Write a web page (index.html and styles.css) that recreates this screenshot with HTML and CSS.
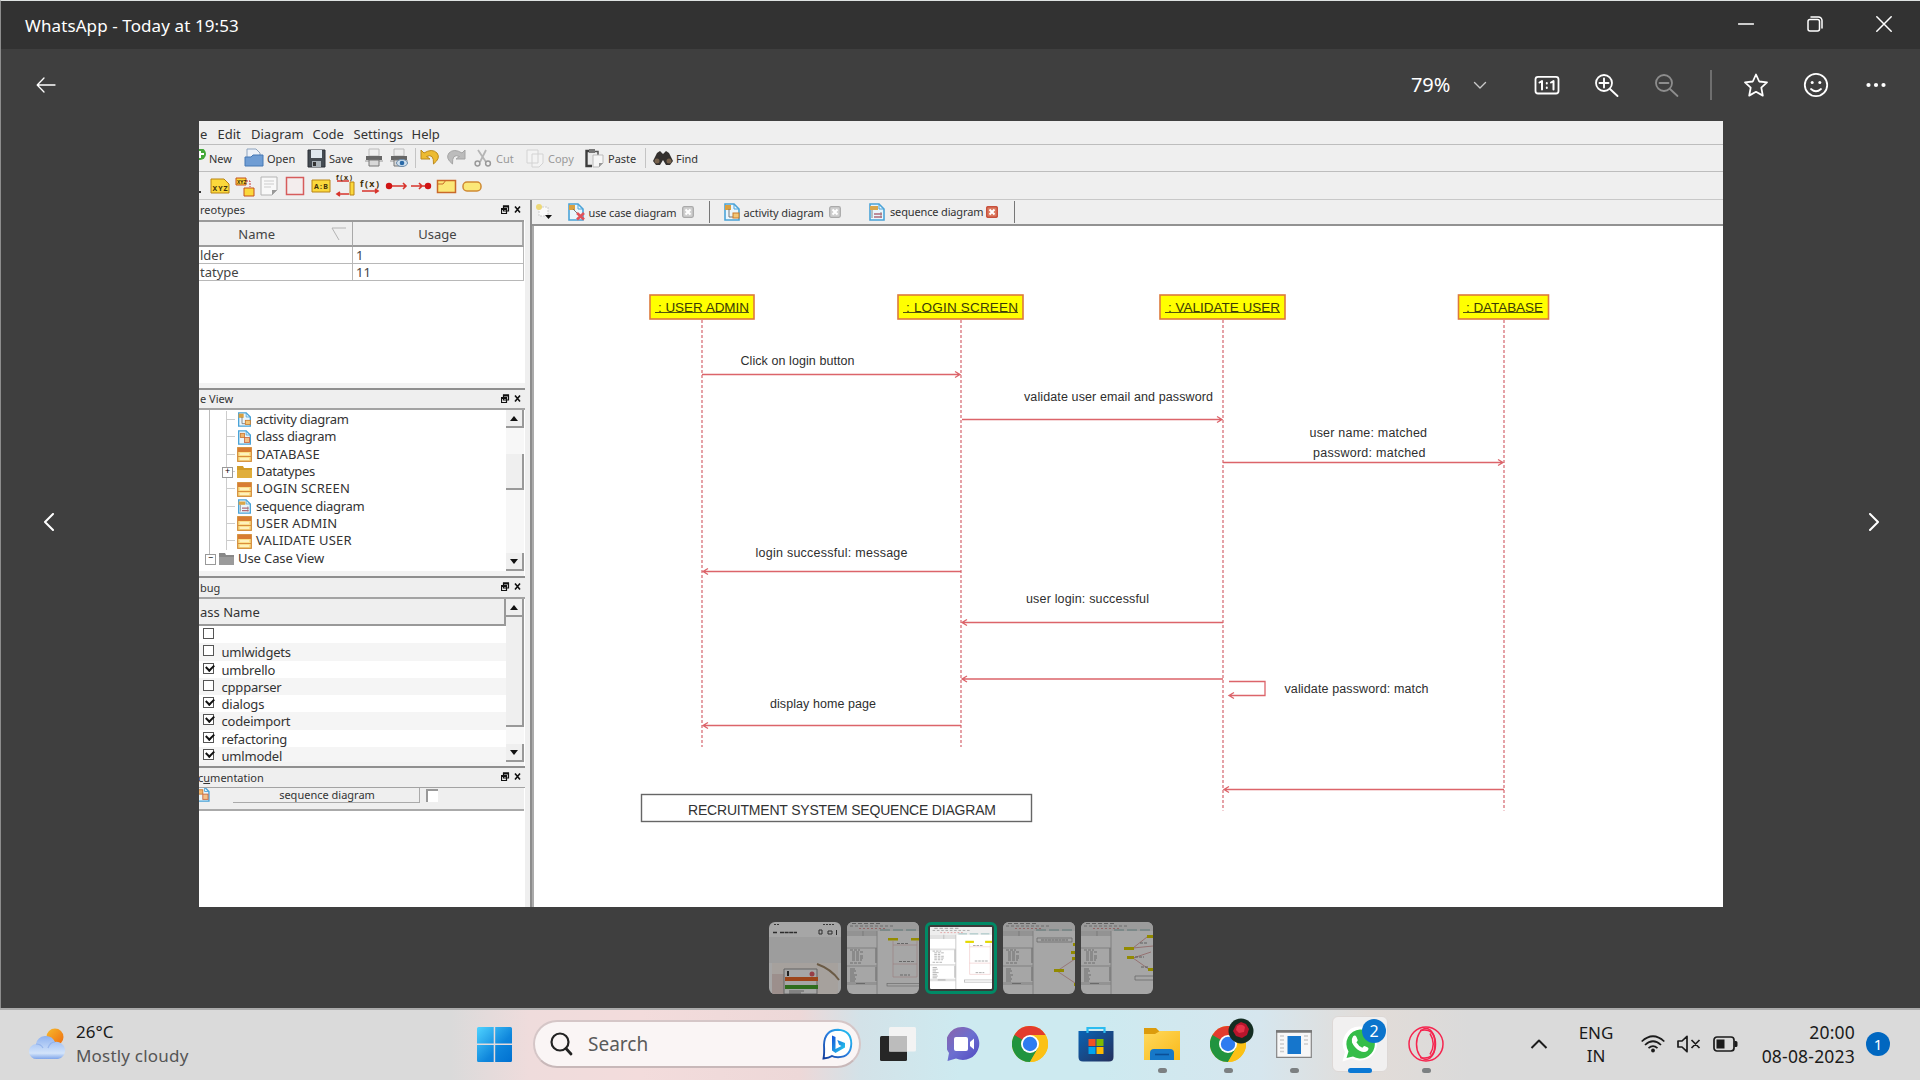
FILE: index.html
```html
<!DOCTYPE html>
<html lang="en">
<head>
<meta charset="utf-8">
<title>WhatsApp - Today at 19:53</title>
<link rel="stylesheet" href="styles.css">
</head>
<body>
<svg class="defs" width="0" height="0" aria-hidden="true">
  <defs>
    <linearGradient id="win" x1="0" y1="0" x2="1" y2="1"><stop offset="0" stop-color="#4fd3ff"/><stop offset=".6" stop-color="#0f86dc"/><stop offset="1" stop-color="#0070d0"/></linearGradient>
    <linearGradient id="cloud" x1="0" y1="0" x2="0" y2="1"><stop offset="0" stop-color="#8fb2f0"/><stop offset=".75" stop-color="#d3e4fa"/><stop offset="1" stop-color="#7fa5ea"/></linearGradient>
    <linearGradient id="sun" x1="0" y1="0" x2="1" y2="1"><stop offset="0" stop-color="#f7bb2b"/><stop offset="1" stop-color="#ee6a10"/></linearGradient>
    <linearGradient id="bing" x1="1" y1="0" x2="0" y2="1"><stop offset="0" stop-color="#21c8f2"/><stop offset=".5" stop-color="#2a7de0"/><stop offset="1" stop-color="#123d9c"/></linearGradient>
    <linearGradient id="bingb" x1="0" y1="0" x2="1" y2="1"><stop offset="0" stop-color="#1450d8"/><stop offset="1" stop-color="#27d3ee"/></linearGradient>
    <linearGradient id="chat" x1="0" y1="0" x2="1" y2="1"><stop offset="0" stop-color="#8d62a8"/><stop offset=".5" stop-color="#6c6fd0"/><stop offset="1" stop-color="#5048c0"/></linearGradient>
    <linearGradient id="store" x1="0" y1="0" x2="1" y2="1"><stop offset="0" stop-color="#0a63b4"/><stop offset="1" stop-color="#25305c"/></linearGradient>
    <linearGradient id="folder" x1="0" y1="0" x2="1" y2="1"><stop offset="0" stop-color="#ffd95c"/><stop offset="1" stop-color="#f9b91a"/></linearGradient>
    <symbol id="doc" viewBox="0 0 18 18"><path d="M2 1h9l5 5v11H2z" fill="#eaf6fd" stroke="#4aa3d8" stroke-width="1.6"/><path d="M11 1v5h5" fill="none" stroke="#4aa3d8"/></symbol>
    <symbol id="actor" viewBox="0 0 18 18"><use href="#doc"/><path d="M2 2h6v5H2z" fill="#d9a040"/><path d="M6 6l6 6" stroke="#777"/><path d="M10 10l7 6.500M17 10l-7 6.500" stroke="#e0525a" stroke-width="2.600"/></symbol>
    <symbol id="activity" viewBox="0 0 18 18"><use href="#doc"/><path d="M2 2h6v5H2z" fill="#d9a040"/><path d="M6 6v8h4" fill="none" stroke="#777"/><rect x="10" y="10" width="6" height="5" fill="#f3c778" stroke="#c97a2b"/></symbol>
    <symbol id="class" viewBox="0 0 18 18"><use href="#doc"/><rect x="4" y="4" width="5" height="5" fill="#f0b46c" stroke="#c9772f"/><rect x="9" y="9" width="6" height="6" fill="#f3c088" stroke="#c9653f"/></symbol>
    <symbol id="seq" viewBox="0 0 18 18"><use href="#doc"/><path d="M2 3h8v4H2z" fill="#d9a64a"/><path d="M4 7v8M13 9v6" stroke="#888"/><path d="M6 11h8M6 14h8" stroke="#b06a7a" stroke-width="1.500"/></symbol>
    <symbol id="obj" viewBox="0 0 15 15"><rect x=".7" y=".7" width="13.600" height="13.600" fill="#fbe08a" stroke="#d28a34" stroke-width="1.200"/><path d="M1 1h13v4H1z" fill="#d87c33"/><path d="M1 9.500h13" stroke="#d98c3c"/><path d="M3 7h9M3 12h9" stroke="#fff6cf" stroke-width="1.500"/></symbol>
    <symbol id="float" viewBox="0 0 20 10"><path d="M2.500 1h5v5h-5z M.5 3.500h5v5h-5z" fill="#efefef" stroke="#111" stroke-width="1.200"/><path d="M2 1.500h6M0 4h6" stroke="#111" stroke-width="1.800"/><path d="M14 1.500l5 6M19 1.500l-5 6" stroke="#111" stroke-width="1.600"/></symbol>
    <symbol id="close" viewBox="0 0 12 12"><rect x=".7" y=".7" width="10.600" height="10.600" rx="1.500" fill="#cfcfcf" stroke="#aaa" stroke-width="1.300"/><path d="M3.500 3.500l5 5M8.500 3.500l-5 5" stroke="#fff" stroke-width="2"/></symbol>
    <symbol id="close-red" viewBox="0 0 12 12"><rect x=".7" y=".7" width="10.600" height="10.600" rx="1.500" fill="#dc7a60" stroke="#c8503c" stroke-width="1.500"/><path d="M3.500 3.500l5 5M8.500 3.500l-5 5" stroke="#fff" stroke-width="2"/></symbol>
    <symbol id="chrome" viewBox="0 0 36 36"><circle cx="18" cy="18" r="18" fill="#fbc116"/><path d="M18 18 33.600 9A18 18 0 0 0 2.400 9L10 22z" fill="#e33b2e"/><path d="M2.400 9A18 18 0 0 0 18 36l8-13.500-8-4.500z" fill="#21943f"/><path d="M18 9h15.600A18 18 0 0 1 18 36l8-14z" fill="#fbc116"/><circle cx="18" cy="18" r="9" fill="#fff"/><circle cx="18" cy="18" r="7.200" fill="#2e7cf0"/></symbol>
    <symbol id="panel" viewBox="0 0 72 72"><rect width="72" height="72" fill="#fff"/><rect width="72" height="9" fill="#eee"/><g stroke-width=".8" opacity=".75"><path d="M5 1.500h28" stroke="#555" stroke-dasharray="4 2"/><path d="M3 4h43" stroke="#777" stroke-dasharray="3 2"/><path d="M12 6.500h28" stroke="#d66" stroke-dasharray="2 2"/></g><path d="M0 9h30v5H0zM0 25h30v2H0zM0 43h30v2H0zM0 60h30v3H0z" fill="#e2e2e2"/><path d="M16 9v5" stroke="#bbb"/><path d="M30 9v63" stroke="#c4c4c4"/><path d="M3 28h10M5 30h12M5 32h8M5 34h11M5 36h12M5 38h10M3 41h12" stroke="#888" stroke-width=".7" stroke-dasharray="3 1"/><path d="M3 47h5M3 49h6M3 51h4M3 53h7M3 55h5M3 57h6M3 59h5M9 61.500h9" stroke="#888" stroke-width=".7"/><path d="M29 26v15M29 45v14" stroke="#bbb" stroke-width="1.500"/><path d="M33 8h39" stroke="#7aa" stroke-width=".8" stroke-dasharray="10 3"/></symbol>
    <symbol id="mini" viewBox="0 0 72 72"><use href="#panel"/><rect x="41" y="16" width="10" height="2.500" fill="#e4d800"/><rect x="64" y="16" width="9" height="2.500" fill="#e4d800"/><path d="M46 19v36M70 19v36M46 23h24M46 42h24M46 55h24" fill="none" stroke="#e8b0b0" stroke-width=".5"/><path d="M50 21.500h11M52 39.500h15M53 53h10" stroke="#777" stroke-width=".7" stroke-dasharray="3 1"/><rect x="40" y="61.500" width="34" height="2.500" fill="none" stroke="#999" stroke-width=".6"/></symbol>
  </defs>
</svg>

<div class="viewer">
  <header class="titlebar">
    <span class="title">WhatsApp - Today at 19:53</span>
    <div class="window-buttons">
      <svg width="16" height="16" viewBox="0 0 16 16"><path d="M.5 8h15"/></svg>
      <svg width="16" height="16" viewBox="0 0 16 16"><rect x="1" y="3.500" width="11.500" height="11.500" rx="2"/><path d="M4 1h7.500a3.500 3.500 0 0 1 3.500 3.500V12"/></svg>
      <svg width="16" height="16" viewBox="0 0 16 16"><path d="M.8.8l14.400 14.400M15.200.8.8 15.200"/></svg>
    </div>
  </header>

  <div class="toolbar">
    <svg class="back" width="20" height="16" viewBox="0 0 20 16"><path d="M19 8H1.500M8 1 1.200 8 8 15"/></svg>
    <div class="tools">
      <span class="zoom">79%</span>
      <svg class="dim" viewBox="-12 -12 24 24"><path d="M-5.500-2.500 0 3l5.500-5.500"/></svg>
      <svg viewBox="-12 -12 24 24"><rect x="-11.500" y="-8.200" width="23" height="16.700" rx="2.500"/><path d="M-7.500-2.500-5-4V4.500M4-2.500 6.500-4V4.500M-.2-2v.5M-.2 2.500V3" stroke-width="2"/></svg>
      <svg viewBox="-12 -12 24 24"><circle cx="-3" cy="-2" r="8"/><path d="m3 4 7.500 7M-3-6.500v9M-7.500-2h9" stroke-width="1.900"/></svg>
      <svg class="off" viewBox="-12 -12 24 24"><circle cx="-3" cy="-2" r="8"/><path d="m3 4 7.500 7M-7.500-2h9"/></svg>
      <i class="divider"></i>
      <svg viewBox="-12 -12 24 24"><path d="m0-10.500 3.200 7 7.800.9-5.700 5.200 1.500 8L0 6.800l-6.800 3.800 1.500-8L-11-2.600l7.800-.9z"/></svg>
      <svg viewBox="-12 -12 24 24"><circle r="11.200"/><path d="M-5 4q5 4.500 10 0"/><circle class="fill" cx="-3.800" cy="-2.500" r="1.500"/><circle class="fill" cx="3.800" cy="-2.500" r="1.500"/></svg>
      <svg viewBox="-12 -12 24 24"><circle class="fill" cx="-7.500" r="2.100"/><circle class="fill" cx="0" r="2.100"/><circle class="fill" cx="7.500" r="2.100"/></svg>
    </div>
  </div>

  <div class="stage">
    <svg class="nav" width="12" height="18" viewBox="0 0 12 18"><path d="M10 1 2 9l8 8"/></svg>

    <main class="shot">
      <nav class="menubar"><span>e</span><span>Edit</span><span>Diagram</span><span>Code</span><span>Settings</span><span>Help</span></nav>

      <div class="actions">
        <svg width="8" height="18" viewBox="0 0 8 18"><circle cx="1" cy="5" r="6" fill="#43a838"/><path d="M-2 5h7M1 2v7" stroke="#fff" stroke-width="2"/></svg>
        <span>New</span>
        <svg width="20" height="20" viewBox="0 0 20 20"><path d="M3 1h9l4 4v10H3z" fill="#eef2f8" stroke="#8ca2bd"/><path d="M1 9h6l2-2h10v11H1z" fill="#6f9dd4" stroke="#4678b4"/></svg>
        <span>Open</span>
        <svg width="19" height="19" viewBox="0 0 19 19"><path d="M1 1h17v17H1z" fill="#444b52" stroke="#2c3136"/><path d="M4 1h11v8H4z" fill="#dfe8ef"/><path d="M5 12h9v6H5z" fill="#aab2b8"/><path d="M6 13h3v4H6z" fill="#333"/></svg>
        <span>Save</span>
        <svg width="20" height="20" viewBox="0 0 20 20"><path d="M5 1h10v7H5z" fill="#eee" stroke="#bbb"/><path d="M2 8h16v4H2z" fill="#666"/><path d="M1 13h18" stroke="#c4c4c4" stroke-width="2"/><path d="M5 12h10v6H5z" fill="#d8d8d8" stroke="#777"/></svg>
        <svg width="20" height="20" viewBox="0 0 20 20"><path d="M5 1h10v7H5z" fill="#eee" stroke="#bbb"/><path d="M2 8h16v4H2z" fill="#666"/><path d="M1 13h18" stroke="#c4c4c4" stroke-width="2"/><path d="M5 12h10v6H5z" fill="#d8d8d8" stroke="#777"/><ellipse cx="13" cy="15" rx="5.500" ry="3.500" fill="#cfe0ef" stroke="#6c8cab"/><circle cx="13" cy="15" r="2.300" fill="#2a6aa8"/></svg>
        <i class="bar"></i>
        <svg width="20" height="18" viewBox="0 0 20 18"><path d="M1 1v9h9L6.500 7.500Q14 4 13.500 15 21 9 17 4 12-1 4 4z" fill="#edbb32" stroke="#bd8a1c"/></svg>
        <svg width="20" height="18" viewBox="0 0 20 18"><path d="M19 1v9h-9l3.500-2.500Q6 4 6.500 15-1 9 3 4 8-1 16 4z" fill="#bcbcbc" stroke="#a5a5a5"/></svg>
        <svg width="18" height="18" viewBox="0 0 18 18"><path d="M4 1l8 12M12 1 6 13" stroke="#b5b5b5" stroke-width="1.800"/><circle cx="3.500" cy="14.500" r="2.400" fill="none" stroke="#999" stroke-width="1.500"/><circle cx="14" cy="14.500" r="2.400" fill="none" stroke="#999" stroke-width="1.500"/></svg>
        <span class="faded">Cut</span>
        <svg width="19" height="19" viewBox="0 0 19 19"><path d="M1 1h11v13H1zM6 5h11v9l-4 4H6z" fill="#f3f3f3" stroke="#d3d3d3"/></svg>
        <span class="faded">Copy</span>
        <svg width="20" height="19" viewBox="0 0 20 19"><path d="M9 2H1.500v15H7" fill="#e9e9e9" stroke="#3d3d3d" stroke-width="2.400"/><path d="M9 2.500h4V6" fill="none" stroke="#555" stroke-width="1.500"/><path d="M4 0h6v4H4z" fill="#777"/><path d="M8 6h10v8l-4 4H8z" fill="#f6f6f6" stroke="#bbb"/><path d="M14 18v-4h4z" fill="#999"/></svg>
        <span>Paste</span>
        <i class="bar"></i>
        <svg width="20" height="16" viewBox="0 0 20 16"><path d="M4 3 7 1l3 3 3-3 3 2 4 8-3 4h-4l-3-5-3 5H3l-3-4z" fill="#33302e"/><circle cx="4" cy="11" r="2.500" fill="#77624d"/><circle cx="16" cy="11" r="2.500" fill="#77624d"/></svg>
        <span>Find</span>
      </div>

      <div class="palette">
        <svg width="290" height="27" viewBox="0 0 290 27">
          <path d="M0 19h2v2H0z" fill="#333"/>
          <g fill="#fbd83c" stroke="#b98414"><path d="M12 7h13l5 5v9H12z"/><path d="M37 6h10v7H37zM45 16h10v8H45z" stroke="#c4501c"/><path d="M113 8h18v12h-18z"/></g>
          <path d="M47 9h4v6" fill="none" stroke="#c33" stroke-dasharray="2 1"/>
          <path d="M62 5h16v13l-5 5H62z" fill="#f8f8f8" stroke="#b4b4b4"/><path d="M65 9h10M65 12h10M65 15h7" stroke="#ccc"/><path d="M73 23v-5h5z" fill="#999"/>
          <path d="M87.500 5.500h17v17h-17z" fill="#f3eded" stroke="#d65c5c" stroke-width="1.500"/>
          <path d="M151 10h4v13h-4z" fill="#fbd83c" stroke="#b98414"/>
          <g stroke="#d8342c" stroke-width="1.600" fill="none"><path d="M138 9h12M150 22h-12M141 20l-3 2 3 2M163 19h16M176 17l3 2-3 2"/><path d="M190 14h17M204 11l3 3-3 3M212 14h17M220 11l3 3-3 3"/></g>
          <circle cx="190" cy="14" r="3.200" fill="#d01414"/><circle cx="229" cy="14" r="3.200" fill="#d01414"/>
          <path d="M238.500 8.500h18v12h-18z" fill="#fbe878" stroke="#c96a2a" stroke-width="1.500"/><path d="M239 12h5l3-4" fill="none" stroke="#c96a2a"/>
          <rect x="264" y="10" width="18" height="9" rx="4" fill="#fbe878" stroke="#cf8a34" stroke-width="1.500"/>
          <g class="tiny"><text x="13.500" y="19" textLength="15">XYZ</text><text class="xs" x="38" y="12">XYZ</text><text x="115" y="17" textLength="14">A:B</text><text x="137" y="7.500" textLength="16">f(x)</text><text class="fx" x="161" y="15" textLength="19">f(x)</text></g>
        </svg>
      </div>

      <div class="workspace">
        <aside class="docks">
          <div class="dock-title h20"><span>reotypes</span><svg width="20" height="10"><use href="#float"/></svg></div>
          <div class="stereo">
            <div class="th name">Name<svg width="16" height="14" viewBox="0 0 16 14"><path d="M15 1H1l7 12" fill="none" stroke="#b4b4b4"/></svg></div><div class="th">Usage</div>
            <div class="td first">lder</div><div class="td">1</div>
            <div class="td first">tatype</div><div class="td">11</div>
          </div>
          <div class="blank"></div>

          <div class="dock-title ruled"><span>e View</span><svg width="20" height="10"><use href="#float"/></svg></div>
          <div class="pane tree-pane">
            <ul class="tree">
              <li><svg><use href="#activity"/></svg>activity diagram</li>
              <li><svg><use href="#class"/></svg>class diagram</li>
              <li class="caps"><svg><use href="#obj"/></svg>DATABASE</li>
              <li class="plus"><svg viewBox="0 0 15 15"><path d="M0 2h6l1 2h8v10H0z" fill="#d29b27"/><path d="M0 6h15v8H0z" fill="#e0ae3c"/></svg>Datatypes</li>
              <li class="caps"><svg><use href="#obj"/></svg>LOGIN SCREEN</li>
              <li><svg><use href="#seq"/></svg>sequence diagram</li>
              <li class="caps"><svg><use href="#obj"/></svg>USER ADMIN</li>
              <li class="caps"><svg><use href="#obj"/></svg>VALIDATE USER</li>
              <li class="root"><svg viewBox="0 0 15 15"><path d="M0 2h6l1 2h8v10H0z" fill="#888"/><path d="M0 6h15v8H0z" fill="#9b9b9b"/></svg>Use Case View</li>
            </ul>
            <div class="scroll"><b class="up"></b><i class="thumb t1"></i><b class="down"></b></div>
          </div>

          <div class="dock-title ruled second"><span>bug</span><svg width="20" height="10"><use href="#float"/></svg></div>
          <div class="pane debug-pane">
            <div class="debug">
              <div class="debug-head">ass Name</div>
              <div class="row"><i></i></div>
              <div class="row"><i></i>umlwidgets</div>
              <div class="row"><i class="on"></i>umbrello</div>
              <div class="row"><i></i>cppparser</div>
              <div class="row"><i class="on"></i>dialogs</div>
              <div class="row"><i class="on"></i>codeimport</div>
              <div class="row"><i class="on"></i>refactoring</div>
              <div class="row"><i class="on"></i>umlmodel</div>
            </div>
            <div class="scroll"><b class="up"></b><i class="thumb t2"></i><b class="down"></b></div>
          </div>

          <div class="dock-title ruled third"><span class="nudge">c<u>u</u>mentation</span><svg width="20" height="10"><use href="#float"/></svg></div>
          <div class="doc-row"><svg width="18" height="14" viewBox="5 2 13 16"><use href="#class" width="18" height="18"/></svg><span>sequence diagram</span><i></i></div>
        </aside>

        <section class="editor">
          <div class="tabs">
            <svg width="16" height="16" viewBox="0 0 16 16"><path d="M3 3h9v9H3z" fill="#fafafa" stroke="#ccc" stroke-dasharray="2 1"/><circle cx="3" cy="3" r="3" fill="#edd878"/><path d="M9 11h7l-3.500 4z" fill="#111"/></svg>
            <svg width="18" height="18"><use href="#actor"/></svg><span>use case diagram</span><svg width="12" height="12"><use href="#close"/></svg><i class="tick"></i>
            <svg width="18" height="18"><use href="#activity"/></svg><span>activity diagram</span><svg width="12" height="12"><use href="#close"/></svg><i></i>
            <svg class="lift" width="18" height="18"><use href="#seq"/></svg><span class="lift">sequence diagram</span><svg class="lift" width="12" height="12"><use href="#close-red"/></svg><i class="tick"></i>
          </div>
          <svg class="canvas" width="1189" height="681" viewBox="534 226 1189 681">
            <g class="life"><path d="M702 320V747M961 320V747M1223 320V810.500M1504 320V810.500"/></g>
            <g class="msg">
              <path d="M702 374.500H960M955 371.500l5 3-5 3"/>
              <path d="M962 419.500h260M1217 416.500l5 3-5 3"/>
              <path d="M1223 462.500h280M1498 459.500l5 3-5 3"/>
              <path d="M961 571.500H703M708 568.500l-5 3 5 3"/>
              <path d="M1223 622.500H962M967 619.500l-5 3 5 3"/>
              <path d="M1223 679H962M967 676l-5 3 5 3"/>
              <path d="M961 725.500H703M708 722.500l-5 3 5 3"/>
              <path d="M1504 789.500h-280M1229 786.500l-5 3 5 3"/>
              <path d="M1229 681.500h36V695.500h-36M1234 692.500l-5 3 5 3"/>
            </g>
            <g class="head"><rect x="650" y="295" width="104" height="24"/><rect x="898" y="295" width="125" height="24"/><rect x="1160" y="295" width="125" height="24"/><rect x="1458.500" y="295" width="90" height="24"/></g>
            <path class="under" d="M655 312.500h94M903 312.500h115M1165 312.500h115M1463 312.500h80"/>
            <g class="label">
              <text x="658" y="311.500" textLength="91">: USER ADMIN</text>
              <text x="906" y="311.500" textLength="112">: LOGIN SCREEN</text>
              <text x="1168" y="311.500" textLength="112">: VALIDATE USER</text>
              <text x="1466" y="311.500" textLength="77">: DATABASE</text>
            </g>
            <g class="note">
              <text x="740.500" y="364.500" textLength="114">Click on login button</text>
              <text x="1024" y="401" textLength="189">validate user email and password</text>
              <text x="1309.500" y="436.500" textLength="117.500">user name: matched</text>
              <text x="1313" y="456.500" textLength="112.500">password: matched</text>
              <text x="755.500" y="556.500" textLength="152">login successful: message</text>
              <text x="1026" y="603" textLength="123">user login: successful</text>
              <text x="770" y="708" textLength="106">display home page</text>
              <text x="1284.500" y="693" textLength="144">validate password: match</text>
            </g>
            <rect class="frame" x="641.500" y="794.500" width="390" height="27"/>
            <text class="caption" x="688" y="814.500" textLength="308">RECRUITMENT SYSTEM SEQUENCE DIAGRAM</text>
          </svg>
        </section>
      </div>
    </main>

    <svg class="nav" width="12" height="18" viewBox="0 0 12 18"><path d="m2 1 8 8-8 8"/></svg>
  </div>

  <div class="strip">
    <svg class="thumb-img" viewBox="0 0 72 72"><rect width="72" height="72" fill="#fff"/><path d="M0 15h72v26H0z" fill="#f1f1f1"/><path d="M5 2.500h6M54 2.500h12" stroke="#555" stroke-width="1.200" stroke-dasharray="2 1"/><path d="M4 10.500h4M11 10.500h17" stroke="#444" stroke-width="1.500" stroke-dasharray="4 .6"/><path d="M50 8h3v4h-3zM59 9h4v3h-4zM67.500 8v5" stroke="#444" fill="none"/><path d="M3 41h66v31H3z" fill="#fff7f2"/><path d="M3 52h12v20H3z" fill="#f0dcd8"/><path d="M48 42q14 5 22 16" stroke="#a58c6c" stroke-width="2" fill="none"/><path d="M15 47h33v25H15z" fill="#fff" stroke="#999"/><path d="M16 55h33v4H16z" fill="#f26a28"/><path d="M16 63h33v4H16z" fill="#4aa82e"/><path d="M19 49v5" stroke="#333" stroke-width="2"/><circle cx="43" cy="52" r="2.500" fill="#e8606c"/><path d="M20 69h15M20 71h12" stroke="#777" stroke-width=".8"/></svg>
    <svg class="thumb-img" viewBox="0 0 72 72"><use href="#mini"/></svg>
    <svg class="thumb-img current" viewBox="0 0 72 72"><use href="#mini"/></svg>
    <svg class="thumb-img" viewBox="0 0 72 72"><use href="#panel"/><path d="M54 49l18-12M54 49l18 12" stroke="#d99" stroke-width=".7"/><path d="M51 47h10v3H51zM69 35h5v3h-5zM68 29h6v3h-6zM70 21h4v3h-4zM71 61h3v3h-3z" fill="#e0d400"/><path d="M34 16h35v4H34z" fill="none" stroke="#999" stroke-width=".7"/><path d="M38 18h27" stroke="#888" stroke-width=".8" stroke-dasharray="3 .5"/></svg>
    <svg class="thumb-img" viewBox="0 0 72 72"><use href="#panel"/><path d="M52 26l14-11M52 26l20-2M52 36l18-6M52 36l17 12" fill="none" stroke="#d99" stroke-width=".8"/><path d="M43 25h10v3H43zM46 34h7v3h-7zM66 13h7v3h-7zM67 46h6v3h-6z" fill="#e0d400"/><path d="M54 35h9M59 21h8M60 45h8" stroke="#777" stroke-width=".8" stroke-dasharray="3 1"/><path d="M54 54h20v4H54z" fill="none" stroke="#999" stroke-width=".7"/></svg>
  </div>
</div>

<footer class="taskbar">
  <div class="weather">
    <svg width="37" height="32" viewBox="0 0 37 32"><circle cx="26" cy="9" r="8.500" fill="url(#sun)"/><path d="M8 31a7.500 7.500 0 0 1-1-15 10 10 0 0 1 19-2 8.500 8.500 0 0 1 3 17z" fill="url(#cloud)"/><path d="M7 16q5 0 7 4M19 20q2-6 7-6" fill="none" stroke="#7fa3e6" stroke-width="1.200" opacity=".6"/></svg>
    <div class="two"><span class="temp">26°C</span><span class="sky">Mostly cloudy</span></div>
  </div>
  <svg class="start" width="35" height="35" viewBox="0 0 35 35"><path d="M0 1.500Q0 0 1.500 0h15.200v16.500H0zM18.200 0h15.300Q35 0 35 1.500v15H18.200zM0 18h16.700v17H1.500Q0 35 0 33.500zM18.200 18H35v15.500q0 1.500-1.500 1.500H18.200z" fill="url(#win)"/></svg>
  <div class="search">
    <svg width="24" height="24" viewBox="0 0 24 24"><circle cx="10" cy="10" r="8.500" fill="none" stroke="#222" stroke-width="2.200"/><path d="m16 16.500 5 5.500" stroke="#222" stroke-width="2.800" stroke-linecap="round"/></svg>
    <span>Search</span>
    <svg width="31" height="32" viewBox="0 0 31 32"><path d="M1.500 30.500Q2.500 26 2 17 2.500 2 16 1.800 29 2.500 29.300 15.500 29 29 16 29.200q-4 0-6-1.200-3 2.200-8.500 2.500z" fill="#fff" stroke="url(#bing)" stroke-width="1.900"/><path d="M10 7.500 13.500 9v12l6-3-2.500-1.200L15.300 12l7.700 3v4.500L13.500 25 10 22.500z" fill="url(#bingb)"/></svg>
  </div>
  <div class="apps">
    <div class="app"><svg width="36" height="34" viewBox="0 0 36 34"><rect y="9" width="27" height="25" rx="1.500" fill="#262626"/><rect x="9" width="27" height="24.500" rx="1.500" fill="#f3f3f3"/><path d="M9 9h18v15.500H9z" fill="#bcbcbc"/></svg></div>
    <div class="app"><svg width="34" height="36" viewBox="0 0 34 36"><path d="M17 1a16.500 16.500 0 1 1-8 31.500L.5 35l1.500-8A16.500 16.500 0 0 1 17 1z" fill="url(#chat)"/><rect x="7" y="11" width="14" height="14" rx="2" fill="#fff"/><path d="m23 16 4-3.500v11L23 20z" fill="#fff"/></svg></div>
    <div class="app"><svg width="36" height="36"><use href="#chrome"/></svg></div>
    <div class="app"><svg width="36" height="36" viewBox="0 0 36 36"><path d="M9.500 7V2h17v5" fill="none" stroke="#2bbcf0" stroke-width="2.200"/><path d="M.5 5h35v26q0 4.500-4.500 4.500H5Q.5 35.500.5 31z" fill="url(#store)"/><path d="M9.500 5v2M26.500 5v2" stroke="#2bbcf0" stroke-width="2.200"/><path d="M10.500 13h7v7h-7z" fill="#f25022"/><path d="M18.500 13h7v7h-7z" fill="#7fba00"/><path d="M10.500 21h7v7h-7z" fill="#00a4ef"/><path d="M18.500 21h7v7h-7z" fill="#ffb900"/></svg></div>
    <div class="app"><svg width="36" height="36" viewBox="0 0 36 36"><path d="M0 2h12l4 4v6H0z" fill="#dc9b0c"/><path d="M0 8h11l5-3h20v29H0z" fill="url(#folder)"/><path d="M6 34v-7q0-4 4-4h16q4 0 4 4v7z" fill="#1678c8"/><path d="M11 28.500h14" stroke="#0b4f96" stroke-width="1.600"/></svg><i class="dot"></i></div>
    <div class="app"><svg width="36" height="36"><use href="#chrome"/></svg><svg class="avatar" width="26" height="26" viewBox="0 0 26 26"><circle cx="13" cy="13" r="12.500" fill="#142d22"/><path d="m8 7 5-3 5 2 3 5-2 6-5 3-6-2-3-5z" fill="#b9152c"/><path d="M9 8q5-3 8 1l-1 5-5 1-3-3z" fill="#e63248"/></svg><i class="dot"></i></div>
    <div class="app"><svg width="36" height="28" viewBox="0 0 36 28"><path d="M.7.7h34.600v26.600H.7z" fill="#f7f7f7" stroke="#858585" stroke-width="1.200"/><path d="M0 1.500h36" stroke="#777" stroke-width="2.500"/><path d="M11.500 6h13.500v18H11.500z" fill="#1676cc"/><path d="M4 6h4M4 10h4M4 14h4M4 18h4M4 21.500h4M28 6h4M28 10h4M28 14h4" stroke="#ccc" stroke-width="1.600"/></svg><i class="dot"></i></div>
    <div class="app active"><svg width="36" height="36" viewBox="0 0 36 36"><path d="M18 .5a17 17 0 1 1-8 32L.5 35.500 3 26A17 17 0 0 1 18 .5z" fill="#fff"/><path d="M18 3.500a14.500 14.500 0 1 1-7 27L4.500 32l2-6.500A14.500 14.500 0 0 1 18 3.500z" fill="#35bd49"/><path d="M11 10.500q2-2 3.500.5l1.200 3q.2 1-1.300 2.200 2.200 4 6 5.600 1-1.700 2.200-1.800l3.200 1.500q1.500 1-.3 3.200-3 2.500-8 0-5-2.700-7.500-8.200-1-3.500 1-6z" fill="#fff"/></svg><span class="count">2</span><i class="dot wide"></i></div>
    <div class="app"><svg width="36" height="36" viewBox="0 0 36 36"><g fill="none" stroke="#f5254f" stroke-width="1.500"><circle cx="18" cy="18" r="17"/><ellipse cx="18" cy="18" rx="9.500" ry="15.500"/><path d="M12 4.500Q27 1 27 18T12 31.500M22 7.500q6.500 10.500 0 21"/></g></svg><i class="dot"></i></div>
  </div>
  <div class="tray">
    <svg width="18" height="11" viewBox="0 0 18 11"><path d="m1.500 9 7.500-7.500L16.500 9" stroke-width="2"/></svg>
    <div class="lang"><span>ENG</span><span>IN</span></div>
    <svg width="24" height="18" viewBox="0 0 24 18"><path d="M.7 6.500q11.300-10.500 22.600 0M4 10q8-7.500 16 0M7.500 13.200q4.500-4 9 0"/><circle cx="12" cy="15.500" r="1.900" class="ink"/></svg>
    <svg width="24" height="18" viewBox="0 0 24 18"><path d="M1 6h4l5-4.700v15.400L5 12H1zM14.500 5l8 8M22.500 5l-8 8"/></svg>
    <svg width="25" height="16" viewBox="0 0 25 16"><rect x="1" y="1" width="20" height="14" rx="3"/><path d="M3.500 3.500h8v9h-8zM21.500 5h1.500q1.500 0 1.500 1.500v3q0 1.500-1.500 1.500h-1.500z" class="ink"/></svg>
    <div class="clock"><span>20:00</span><span>08-08-2023</span></div>
    <span class="bubble">1</span>
  </div>
</footer>
</body>
</html>
```
FILE: styles.css
```css
* { box-sizing: border-box; }
body { margin: 0; width: 1920px; height: 1080px; overflow: hidden; font-family: "Noto Sans", sans-serif; color: #222; }
i, b { display: block; font-style: normal; }
svg { display: block; flex: none; }
.defs { position: absolute; }

/* Photo viewer window */
.viewer { height: 1008px; background: #3f3f3f; border-top: 1px solid #dfe3e2; border-left: 1px solid #8d8d8d; display: flex; flex-direction: column; }
.titlebar { height: 48px; background: #323232; display: flex; justify-content: space-between; align-items: center; padding: 0 28px 0 24px; color: #fff; }
.title { font-size: 17px; letter-spacing: .1px; }
.window-buttons { display: flex; gap: 53px; padding-bottom: 2px; }
.window-buttons svg, .toolbar svg, .nav { fill: none; stroke: #fff; stroke-width: 1.5; stroke-linecap: round; stroke-linejoin: round; }
.toolbar { height: 72px; display: flex; align-items: center; justify-content: space-between; padding: 0 32px 0 35px; }
.toolbar .back { stroke-width: 1.3; }
.tools { display: grid; grid-template-columns: 56px 67px 60px 60px 55px 34px 60px 60px 24px; align-items: center; }
.tools svg { width: 24px; height: 24px; overflow: visible; stroke-width: 1.8; }
.tools .zoom { color: #fff; font-size: 20px; letter-spacing: -.1px; margin-left: -1px; padding-bottom: 2px; }
.tools .fill { fill: #fff; stroke: none; }
.tools .dim { stroke: #c9c9c9; stroke-width: 1.4; }
.tools .off { stroke: #8d8d8d; }
.divider { width: 1.5px; height: 30px; background: #6f6f6f; }
.stage { height: 786px; display: grid; grid-template-columns: 198px 1524px 1fr; align-items: center; }
.nav { stroke-width: 2; margin-left: 42px; margin-top: 16px; }
.shot + .nav { margin-left: 145px; }
.strip { display: flex; justify-content: center; gap: 6px; padding-top: 15px; padding-left: 1px; }
.thumb-img { width: 72px; height: 72px; border-radius: 6px; filter: brightness(.65); }
.thumb-img.current { filter: none; border: 3px solid #008a66; padding: 2px; background: #3a3a3a; }

/* UML editor */
.shot { height: 786px; background: #efefef; overflow: hidden; display: flex; flex-direction: column; }
.menubar { height: 24px; border-bottom: 1px solid #bdbdbd; display: grid; grid-template-columns: 17.5px 33.5px 61.5px 41px 58px 40px; padding: 0 0 0 1px; line-height: 26px; font-size: 13px; color: #333; }
.actions { height: 27px; border-bottom: 1px solid #bdbdbd; display: grid; grid-template-columns: 10px 35px 23px 40px 22px 35px 25px 26px 5px 26px 28px 22px 30px 22px 37px 23px 37px 8px 23px 30px; align-items: center; font-size: 11px; color: #333; white-space: nowrap; }
.actions .faded { color: #999; }
.bar { width: 1px; height: 20px; background: #c4c4c4; }
.palette { height: 27px; }
.tiny { font-size: 7px; font-weight: 700; fill: #43320a; }
.tiny .fx { font-size: 9px; }
.tiny .xs { font-size: 5px; }
.workspace { flex: 1; display: grid; grid-template-columns: 332px 1192px; border-top: 1px solid #c8c8c8; }
.docks { width: 326px; min-width: 0; overflow: hidden; background: #fff; }
.dock-title { display: flex; justify-content: space-between; align-items: center; padding: 0 4px 0 1px; font-size: 11px; color: #333; line-height: 18px; background: #efefef; }
.dock-title svg { margin-bottom: 1px; }
.dock-title .nudge { margin-left: -2px; }
.h20 { height: 20px; }
.stereo { width: 325px; display: grid; grid-template-columns: 154px 171px; grid-template-rows: 25px 17px 17px; font-size: 13px; border-top: 2px solid #9a9a9a; height: 61px; background: #fff; color: #444; }
.th { background: #efefef; border-right: 2px solid #a9a9a9; border-bottom: 2px solid #9c9c9c; text-align: center; line-height: 24px; }
.th.name { display: flex; justify-content: flex-end; gap: 56px; padding-right: 5px; align-items: center; border-right-width: 1.5px; }
.td { border-right: 1px solid #b8b8b8; border-bottom: 1px solid #b8b8b8; line-height: 17px; padding-left: 3px; }
.td.first { padding-left: 1px; }
.blank { height: 107px; background: #fff; border-bottom: 5px solid #f3f3f3; }
.ruled { height: 22px; border-top: 2px solid #8f8f8f; border-bottom: 2px solid #a3a3a3; }
.second { height: 23px; }
.third { height: 22px; border-bottom-width: 1px; }
.pane { display: grid; grid-template-columns: 1fr 18px; width: 325px; background: #fff; }
.tree-pane { height: 166px; border-bottom: 5px solid #f3f3f3; }
.tree { margin: 0; padding: 1px 0 0; list-style: none; font-size: 13px; letter-spacing: -.3px; color: #333; background: linear-gradient(90deg, transparent 10px, #bbb 10px 11px, transparent 11px) 0 0 / 100% 148px no-repeat; }
.tree li { height: 17.35px; line-height: 17.35px; display: flex; align-items: center; gap: 4px; padding-left: 38px; position: relative; white-space: nowrap; background: linear-gradient(#ccc, #ccc) 27px 0 / 1px 100% no-repeat, linear-gradient(#ccc, #ccc) 27px 8px / 9px 1px no-repeat; }
.tree .caps { letter-spacing: .2px; }
.tree svg { width: 15px; height: 15px; }
.tree .root { padding-left: 20px; background: none; letter-spacing: -.1px; }
.plus::before, .root::before { content: "+"; position: absolute; left: 23px; top: 4px; width: 9px; height: 9px; border: 1px solid #999; background: #fff; font-size: 9px; line-height: 6px; text-align: center; color: #000; }
.root::before { content: "−"; left: 6px; }
.scroll { background: #f7f7f7; display: flex; flex-direction: column; }
.scroll b { height: 18px; background: #efefef; border-right: 2px solid #999; border-bottom: 2px solid #999; display: grid; place-items: center; }
.scroll b::before { content: ""; border: 4px solid transparent; border-top: 0; border-bottom: 5px solid #111; }
.scroll b.down::before { border-top: 5px solid #111; border-bottom: 0; }
.scroll .down { margin-top: auto; }
.thumb { background: #efefef; border-right: 2px solid #999; border-bottom: 2px solid #999; }
.t1 { height: 36px; margin-top: 26px; }
.t2 { height: 110px; }
.debug-pane { height: 167px; border-bottom: 4px solid #f3f3f3; font-size: 13px; color: #333; }
.debug-head { height: 27px; background: #efefef; border-bottom: 2px solid #999; border-right: 2px solid #999; line-height: 27px; padding-left: 1px; }
.debug { overflow: hidden; }
.row { height: 17.3px; line-height: 18px; display: flex; gap: 7.5px; padding-left: 4px; letter-spacing: -.2px; }
.row:nth-child(odd) { background: #f5f5f5; }
.row i { width: 11px; height: 11px; margin-top: 2px; border: 1px solid #555; background: #fff; position: relative; flex: none; }
.row i.on::after { content: ""; position: absolute; left: 2px; top: 0; width: 6px; height: 4px; border: solid #111; border-width: 0 0 2px 2px; transform: rotate(-45deg); }
.doc-row { height: 23px; border-bottom: 2px solid #aaa; display: grid; grid-template-columns: 34px 187px 20px; font-size: 11px; line-height: 14px; width: 325px; color: #333; background: #efefef; }
.doc-row svg { margin-left: -3px; }
.doc-row span { height: 15px; text-align: center; padding-left: 2px; border-right: 1px solid #aaa; border-bottom: 1px solid #aaa; }
.doc-row i { width: 12px; height: 13px; margin: 1px 0 0 6px; background: #fff; border-top: 2px solid #999; border-left: 2px solid #999; }

.editor { border-left: 2px solid #8d8d8d; margin-left: -1px; display: flex; flex-direction: column; }
.tabs { height: 26px; border-bottom: 2px solid #929292; display: grid; grid-template-columns: 31px 21.500px 93px 27px 14px 21px 85px 20px 19.500px 22px 96px 28px 10px; padding-left: 4px; align-items: center; font-size: 11px; color: #333; white-space: nowrap; }
.tabs span { letter-spacing: -.15px; }
.tabs .tick { width: 1px; height: 22px; background: #777; }
.tabs .lift { margin-top: -1px; }
.canvas { background: #fff; border-left: 2px solid #ababab; width: 1191px; }
.canvas text { font-family: "Liberation Sans", Arial, sans-serif; }
.life { fill: none; stroke: #d87078; stroke-width: 1.3; stroke-dasharray: 3 2; }
.msg { fill: none; stroke: #dc646a; stroke-width: 1.3; }
.head { fill: #ff0; stroke: #dd7a3c; stroke-width: 1.6; }
.under { stroke: #55550a; stroke-width: 1; }
.label { font-size: 13.5px; fill: #3c3c05; }
.note { font-size: 12.5px; fill: #2e2e2e; }
.caption { font-size: 14px; fill: #333; }
.frame { fill: #fff; stroke: #666; stroke-width: 1.4; }

/* Taskbar */
.taskbar { height: 72px; border-top: 2px solid #ababab; background: linear-gradient(90deg, #dadada 0 450px, #efdcdc 530px, #f3dcdc 640px, #edd8d8 800px, #d3e2e8 860px, #cdeaf0 960px 1100px, #d6e6ee 1260px, #e2dcd8 1370px, #dadada 1470px); display: grid; grid-template-columns: 477px 56px 332px 612px 1fr; align-items: center; padding-bottom: 2px; }
.weather { display: flex; align-items: center; gap: 10px; padding-left: 29px; }
.two, .lang, .clock { display: flex; flex-direction: column; font-size: 17px; line-height: 24px; }
.temp { color: #1b1b1b; }
.sky { color: #555; letter-spacing: .2px; }
.search { height: 48px; width: 328px; border: 2px solid #d5c6c7; border-bottom-color: #c8b8b9; border-radius: 24px; background: #faf5f5; display: grid; grid-template-columns: 38px 234px 32px; align-items: center; padding-left: 15px; font-size: 19px; color: #5a5a5a; }
.apps { display: flex; }
.app { width: 66px; height: 56px; display: grid; place-items: center; position: relative; }
.active::before { content: ""; position: absolute; inset: 0 5px; border-radius: 6px; background: #f1f0f0; border: 1px solid #ddd8d6; }
.active svg { position: relative; }
.dot { position: absolute; bottom: -1px; left: 29px; width: 9px; height: 5px; border-radius: 3px; background: #7c8082; }
.dot.wide { left: 21px; width: 24px; background: #0b78d4; }
.avatar { position: absolute; left: 33px; top: 2px; }
.count { position: absolute; left: 35px; top: 3px; width: 24px; height: 24px; border-radius: 50%; background: #0b74cc; color: #fff; text-align: center; line-height: 24px; font-size: 16px; }
.tray { display: grid; grid-template-columns: 36px 75px 36px 36px 30px 112px 35px; align-items: center; padding-left: 53px; color: #1b1b1b; }
.tray svg { fill: none; stroke: #1b1b1b; stroke-width: 1.7; stroke-linejoin: round; }
.tray .ink { fill: #1b1b1b; stroke: none; }
.lang { text-align: center; line-height: 23px; padding-right: 15px; }
.clock { text-align: right; font-size: 17.5px; letter-spacing: .2px; }
.bubble { margin-left: 11px; width: 24px; height: 24px; border-radius: 50%; background: #0067c0; color: #fff; text-align: center; line-height: 24px; font-size: 15px; }
```
